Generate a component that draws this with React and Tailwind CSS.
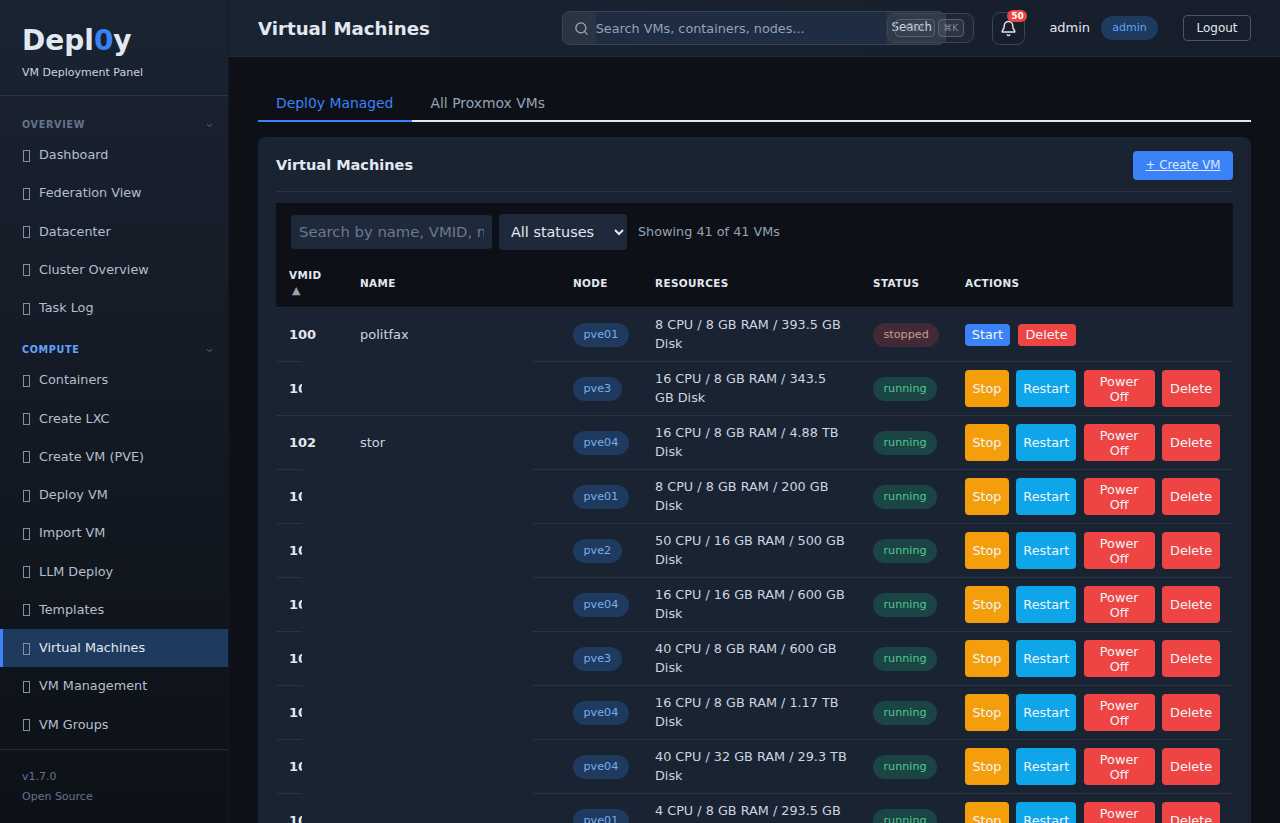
import { Bell, ChevronDown, Search } from 'lucide-react';

const overview = ['Dashboard', 'Federation View', 'Datacenter', 'Cluster Overview', 'Task Log'];

const compute = [
  'Containers',
  'Create LXC',
  'Create VM (PVE)',
  'Deploy VM',
  'Import VM',
  'LLM Deploy',
  'Templates',
  'Virtual Machines',
  'VM Management',
  'VM Groups',
];

const vms = [
  { id: 100, name: 'politfax', node: 'pve01', res: '8 CPU / 8 GB RAM / 393.5 GB Disk', status: 'stopped' },
  { id: 101, node: 'pve3', res: '16 CPU / 8 GB RAM / 343.5 GB Disk', status: 'running', keepLine: true },
  { id: 102, name: 'stor', node: 'pve04', res: '16 CPU / 8 GB RAM / 4.88 TB Disk', status: 'running' },
  { id: 103, node: 'pve01', res: '8 CPU / 8 GB RAM / 200 GB Disk', status: 'running' },
  { id: 104, node: 'pve2', res: '50 CPU / 16 GB RAM / 500 GB Disk', status: 'running' },
  { id: 105, node: 'pve04', res: '16 CPU / 16 GB RAM / 600 GB Disk', status: 'running' },
  { id: 106, node: 'pve3', res: '40 CPU / 8 GB RAM / 600 GB Disk', status: 'running' },
  { id: 107, node: 'pve04', res: '16 CPU / 8 GB RAM / 1.17 TB Disk', status: 'running' },
  { id: 108, node: 'pve04', res: '40 CPU / 32 GB RAM / 29.3 TB Disk', status: 'running' },
  { id: 109, node: 'pve01', res: '4 CPU / 8 GB RAM / 293.5 GB Disk', status: 'running' },
];

function NavItem({ label }) {
  const active = label === 'Virtual Machines';
  return (
    <a className={`flex items-center h-[38.25px] text-[12.8px] ${active ? 'pl-[19px] bg-[#1e3a5f] text-[#e2e8f0] border-l-[3px] border-[#3b82f6]' : 'pl-[22px] text-[#b4bfcd]'}`}>
      {/* missing-glyph box, the icon font never loaded */}
      <span className="w-[17px] shrink-0 pt-[2px]">
        <span className="block ml-[1px] w-[7px] h-[12px] border border-[#858f9e]" />
      </span>
      {label}
    </a>
  );
}

function NavSection({ title, titleColor, items, className }) {
  return (
    <div className={className}>
      <div className="flex items-center justify-between pl-[22px] pr-[14px] pt-[2px] h-[20px]">
        <span className={`text-[9.6px] font-bold tracking-[0.7px] ${titleColor}`}>{title}</span>
        <ChevronDown size={9} className="text-[#64748b]" strokeWidth={2.5} />
      </div>
      <div className="mt-[1.5px]">
        {items.map((label) => (
          <NavItem key={label} label={label} />
        ))}
      </div>
    </div>
  );
}

function Sidebar() {
  return (
    <aside className="w-[229px] shrink-0 h-full flex flex-col bg-gradient-to-b from-[#1a2332] to-[#0d1117] border-r border-[#141a24]">
      <div className="h-[96px] shrink-0 pl-[22px] pt-[20px] border-b border-[#2a3547]">
        <div className="text-[28px] leading-[41px] font-bold text-[#e2e8f0]">
          Depl<span className="text-[#3b82f6]">0</span>y
        </div>
        <div className="text-[11px] leading-[14px] mt-[5px] text-[#cbd5e1]">VM Deployment Panel</div>
      </div>
      <nav className="flex-1 overflow-hidden pt-[18px]">
        <NavSection title="OVERVIEW" titleColor="text-[#64748b]" items={overview} />
        <NavSection title="COMPUTE" titleColor="text-[#60a5fa]" items={compute} className="mt-[12.5px]" />
      </nav>
      <div className="h-[74px] shrink-0 border-t border-[#232b38] pl-[22px] pt-[17px] text-[11px] leading-[20px] text-[#64748b]">
        <div>v1.7.0</div>
        <div>Open Source</div>
      </div>
    </aside>
  );
}

function Header() {
  return (
    <header className="h-[57px] shrink-0 flex items-center pl-[29px] pr-[29px] bg-gradient-to-r from-[#1a2332] to-[#161e2b] border-b border-[#232b38]">
      <h1 className="text-[18.2px] pt-[2px] font-bold text-[#e2e8f0] w-[304px]">Virtual Machines</h1>
      <div className="relative w-[385px] h-[34px] flex items-center rounded-lg border border-[#3a4556] bg-[#2a3443]">
        <Search size={15} className="ml-[11px] mr-[7px] text-[#a3adba] shrink-0" />
        <input
          placeholder="Search VMs, containers, nodes..."
          className="w-[290px] h-[32px] bg-[#1e2d42] text-[12.8px] outline-none placeholder:text-[#94a3b8]"
        />
        <span className="w-[60px] text-center text-[11.8px] text-[#cbd5e1] -ml-[4px]">Search</span>
        <div className="absolute left-[324px] top-[1px] w-[87px] h-[30px] rounded-lg border border-[#3a4556] bg-[#ffffff08] flex items-center pl-[7px] gap-[3px]">
          <span className="w-[40px] h-[18px] rounded border border-[#566273] bg-[#ffffff08] text-[10px] leading-[16px] text-center text-[#7f8a9a]">Ctrl</span>
          <span className="w-[26px] h-[18px] rounded border border-[#566273] bg-[#ffffff10] text-[9px] leading-[16px] text-center text-[#7f8a9a]">⌘K</span>
        </div>
      </div>
      <button className="relative ml-[46px] w-[33px] h-[33px] flex items-center justify-center rounded-lg border border-[#3a4556] text-[#e2e8f0]">
        <Bell size={17} />
        <span className="absolute -top-[3px] left-[14px] w-[20px] h-[12px] rounded-full bg-[#ef4444] text-white text-[9px] leading-[12px] font-bold text-center">50</span>
      </button>
      <span className="ml-[24px] text-[13px] text-[#e2e8f0]">admin</span>
      <span className="ml-[11px] w-[57px] h-[24px] rounded-full bg-[#1e3a5f] text-[#60a5fa] text-[11px] leading-[24px] text-center">admin</span>
      <button className="ml-[25px] w-[68px] h-[26px] rounded border border-[#4a5566] text-[12px] text-[#e2e8f0]">Logout</button>
    </header>
  );
}

function VmRow({ vm }) {
  const blank = !vm.name;
  const td = 'h-[54px] border-b border-[#2a3342] px-[13px] align-middle';
  return (
    <tr>
      <td className={`${td} font-bold text-[13px] text-[#e2e8f0]`}>{vm.id}</td>
      <td className={`${td} relative text-[13px] text-[#cbd5e1]`}>
        {vm.name}
        {blank && (
          <div className={`absolute -top-px left-[-45px] right-[28px] bg-[#1a2332] ${vm.keepLine ? 'bottom-0' : '-bottom-px'}`} />
        )}
      </td>
      <td className={td}>
        <span className="block w-fit h-[24px] px-[10.5px] rounded-full bg-[#1e3a5f] text-[#7aaeea] text-[11.2px] leading-[23px]">{vm.node}</span>
      </td>
      <td className={`${td} text-[12.8px] leading-[18.6px] text-[#cbd5e1]`}>{vm.res}</td>
      <td className={td}>
        <span className={`block w-fit h-[24px] px-[10.5px] rounded-full text-[11.2px] leading-[23px] ${vm.status === 'running' ? 'bg-[#1b4444] text-[#4ec795]' : 'bg-[#412a35] text-[#d09a90]'}`}>{vm.status}</span>
      </td>
      <td className={td}>
        {vm.status === 'running' ? (
          <div className="flex gap-[7.5px] text-[12.8px] leading-[15px] text-[#f1f5f9] text-center">
            <button className="w-[44px] h-[37px] rounded bg-[#f59e0b]">Stop</button>
            <button className="w-[60px] h-[37px] rounded bg-[#0ea5e9]">Restart</button>
            <button className="w-[71px] h-[37px] px-[12px] rounded bg-[#ef4444]">Power Off</button>
            <button className="w-[58px] h-[37px] rounded bg-[#ef4444]">Delete</button>
          </div>
        ) : (
          <div className="flex gap-[7.5px] text-[12.8px] leading-[15px] text-[#f1f5f9]">
            <button className="w-[45px] h-[22px] rounded bg-[#3b82f6]">Start</button>
            <button className="w-[58px] h-[22px] rounded bg-[#ef4444]">Delete</button>
          </div>
        )}
      </td>
    </tr>
  );
}

function VmTable() {
  const th = 'px-[13px] text-left align-middle text-[10.4px] font-bold tracking-[0.4px] uppercase text-[#e2e8f0] border-b border-[#232b38]';
  return (
    <table className="w-full table-fixed border-separate border-spacing-0">
      <colgroup>
        <col className="w-[71px]" />
        <col className="w-[213px]" />
        <col className="w-[82px]" />
        <col className="w-[218px]" />
        <col className="w-[92px]" />
        <col />
      </colgroup>
      <thead>
        <tr className="h-[48px]">
          <th className={th}>
            VMID
            <div className="text-[#94a3b8] text-[11px] leading-[16px] pl-[3px]">▲</div>
          </th>
          <th className={th}>Name</th>
          <th className={th}>Node</th>
          <th className={th}>Resources</th>
          <th className={th}>Status</th>
          <th className={th}>Actions</th>
        </tr>
      </thead>
      <tbody className="bg-[#1a2332]">
        {vms.map((vm) => (
          <VmRow key={vm.id} vm={vm} />
        ))}
      </tbody>
    </table>
  );
}

export default function App() {
  return (
    <div className="flex h-screen overflow-hidden bg-[#0d1117] font-['DejaVu_Sans',sans-serif] text-[#e2e8f0]">
      <Sidebar />
      <div className="flex-1 min-w-0 flex flex-col">
        <Header />
        <main className="flex-1 overflow-hidden px-[29px] pt-[29px]">
          <div className="flex h-[36px] text-[13.9px]">
            <div className="w-[154px] pl-[18px] leading-[34px] text-[#3b82f6] border-b-2 border-[#3b82f6]">Depl0y Managed</div>
            <div className="flex-1 pl-[18.5px] leading-[34px] text-[#94a3b8] border-b-2 border-[#e2e8f0]">All Proxmox VMs</div>
          </div>
          <section className="mt-[15px] rounded-lg bg-[#1a2332] px-[18px]">
            <div className="h-[55px] pt-[2px] flex items-center justify-between border-b border-[#2a3342]">
              <h2 className="text-[14.5px] pt-[2px] font-bold text-[#e2e8f0]">Virtual Machines</h2>
              <a className="h-[29px] w-[100px] rounded bg-[#3b82f6] text-[11.8px] leading-[29px] text-center text-[#dbeafe] underline">+ Create VM</a>
            </div>
            <div className="mt-[11px] bg-[#0d1117]">
              <div className="h-[57px] flex items-center pl-[15px] gap-[7px]">
                <input
                  placeholder="Search by name, VMID, node..."
                  className="w-[201px] h-[34px] px-[8px] rounded bg-[#1e293b] text-[14.8px] outline-none placeholder:text-[#6b7a90]"
                />
                <select className="w-[128px] h-[36px] pl-[8px] rounded bg-[#1e293b] text-[14.4px] text-[#e2e8f0] outline-none">
                  <option>All statuses</option>
                </select>
                <span className="ml-[4px] text-[12.8px] text-[#94a3b8]">Showing 41 of 41 VMs</span>
              </div>
              <VmTable />
            </div>
          </section>
        </main>
      </div>
    </div>
  );
}
